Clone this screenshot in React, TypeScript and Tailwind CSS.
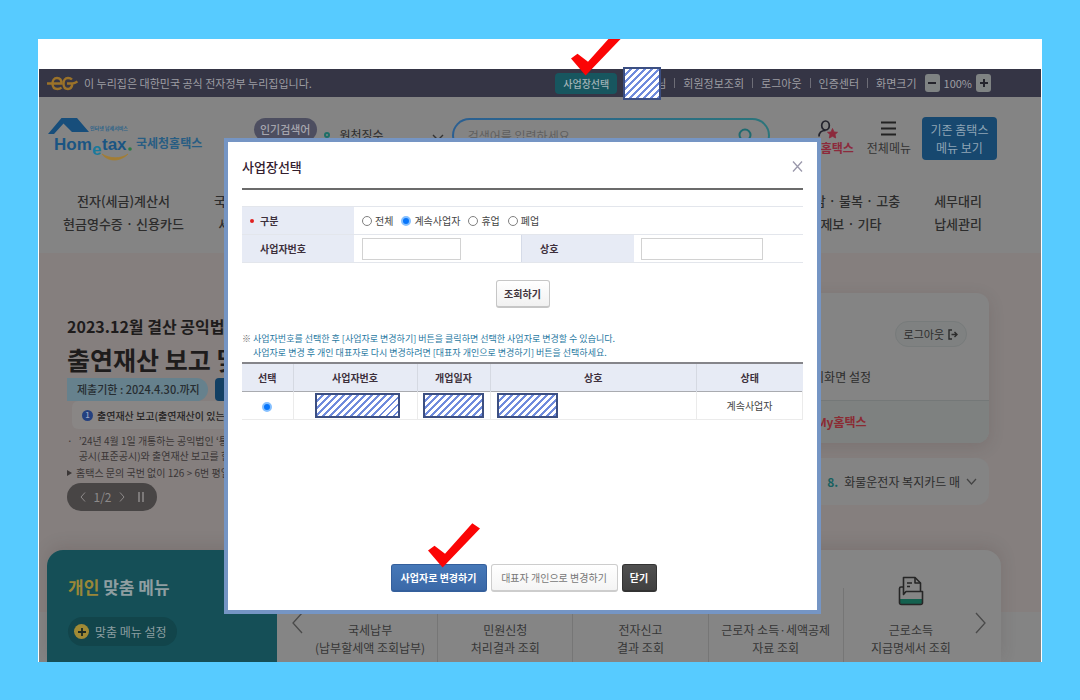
import React from 'react';

const hatchClass =
  'block border-2 border-[#3c4f82] bg-[repeating-linear-gradient(135deg,#ffffff_0px,#ffffff_3px,#6f8bdc_3px,#6f8bdc_5px)]';

function Hatch({ className }: { className: string }) {
  return <span aria-hidden="true" className={`${hatchClass} ${className}`} />;
}

function CheckMark({ className }: { className: string }) {
  return (
    <svg
      aria-hidden="true"
      viewBox="0 0 52 45"
      className={`pointer-events-none absolute z-20 h-[45px] w-[52px] max-w-none ${className}`}
    >
      <path d="M0 27.5 L6.5 22.8 L17 30.8 L44.3 0.3 L52 5.5 L14.6 44.6 Z" fill="#fb0505" />
    </svg>
  );
}

function Divider() {
  return <span className="h-[10px] w-px bg-[#6d6d77]" />;
}

function TopBar() {
  return (
    <div className="flex h-7 items-center justify-between bg-[#353545] pr-[50px] pl-2 text-[11px] text-[#9d9da3]">
      <div className="flex items-center gap-[6px]">
        <svg aria-hidden="true" viewBox="0 0 31 15" className="h-[15px] w-[31px]" fill="none" stroke="#9b7229" strokeWidth="2.4">
          <path d="M0 7.5 H14.5 C14.5 3.5 12.5 2 10 2 C7 2 5.5 4.5 5.5 7.5 C5.5 11 7.5 13 10.5 13 C12 13 13.5 12.5 14.5 11.5" />
          <path d="M25 3.5 C24 2.5 22.500 2 21 2 C18 2 16.500 4.500 16.500 7.500 C16.500 11 18 13 21 13 C24 13 25 11 25.500 7.500 H20 M25.500 7.500 C27.500 7.500 28.500 7 30.500 5.500" />
        </svg>
        <span>이 누리집은 대한민국 공식 전자정부 누리집입니다.</span>
      </div>
      <div className="flex items-center gap-2">
        <div className="relative -mr-[2px]">
          <button className="h-[21px] w-[62px] rounded bg-[#17565f] text-[10px] font-medium text-[#a3b4b9]">
            사업장선택
          </button>
          <CheckMark className="-top-[42px] left-4" />
        </div>
        <div className="flex items-center">
          <Hatch className="relative z-10 h-[33px] w-[38px]" />
          <span className="-ml-[5px]">님</span>
        </div>
        <Divider />
        <a href="#member">회원정보조회</a>
        <Divider />
        <a href="#logout">로그아웃</a>
        <Divider />
        <a href="#cert">인증센터</a>
        <Divider />
        <span>화면크기</span>
        <div className="flex items-center gap-1">
          <button aria-label="축소" className="flex h-[18px] w-[15px] items-center justify-center rounded-[3px] bg-[#7f8383]">
            <span className="h-[2px] w-2 bg-[#24242c]" />
          </button>
          <span>100%</span>
          <button aria-label="확대" className="flex h-[18px] w-[15px] items-center justify-center rounded-[3px] bg-[#7f8383]">
            <svg viewBox="0 0 8 8" className="size-2" stroke="#24242c" strokeWidth="2">
              <path d="M4 0V8M0 4H8" />
            </svg>
          </button>
        </div>
      </div>
    </div>
  );
}

function Logo() {
  return (
    <a href="#home" aria-label="홈택스" className="block">
      <svg viewBox="0 0 158 46" className="h-[46px] w-[158px]">
        <path d="M0 17 L13.500 1 H29 L41 15 H24 L15.500 6.500 L6 17 Z" fill="#174e7b" />
        <text x="42" y="13" fontSize="5" fontWeight="700" fill="#2c6389" fontFamily="'Noto Sans CJK KR', sans-serif">
          인터넷 납세서비스
        </text>
        <g fontFamily="'Liberation Sans', sans-serif" fontWeight="700" fill="#1a5583">
          <text x="6" y="33" fontSize="17">Hom</text>
          <text x="44" y="38" fontSize="17" fill="#197a9c">e</text>
          <text x="54" y="33" fontSize="17">tax</text>
        </g>
        <circle cx="82" cy="32" r="1.8" fill="#2c7a45" />
        <path d="M54 37 C60 45 72 45 80 37 C73 42 62 42 54 37 Z" fill="#a37d33" stroke="#a37d33" strokeWidth="0.800" />
        <text x="88" y="31" fontSize="12" fontWeight="700" fill="#285d83" fontFamily="'Noto Sans CJK KR', sans-serif">
          국세청홈택스
        </text>
      </svg>
    </a>
  );
}

function SiteHeader() {
  return (
    <header className="bg-[#848484] pt-5 pb-[18px] text-[#2c2c2c]">
      <div className="flex h-[68px] items-start justify-between pr-11 pl-[9px]">
        <Logo />
        <div className="ml-[14px] flex items-start pt-px">
          <span className="rounded-xl bg-[#4d4e60] px-[6px] text-[11px] leading-[23px] font-medium text-[#a5a5ad]">인기검색어</span>
          <div className="ml-[7px] flex items-center gap-[10px] pt-[7px] text-[12px] leading-5">
            <span className="size-[6px] rounded-full border-2 border-[#1d6f68]" />
            <span>원천징수</span>
          </div>
          <svg aria-hidden="true" viewBox="0 0 12 8" className="mt-4 ml-12 h-2 w-3" fill="none" stroke="#333" strokeWidth="1.400">
            <path d="M1 1L6 6L11 1" />
          </svg>
          <div className="ml-2 rounded-[18px] bg-linear-to-r from-[#2b5f92] to-[#2b757b] p-[2px]">
            <div className="flex h-[31px] w-[314px] items-center justify-between rounded-2xl bg-[#848484] px-[14px]">
              <input
                aria-label="검색어"
                placeholder="검색어를 입력하세요"
                className="w-60 bg-transparent text-[12px] outline-none placeholder:text-[#5f5f5f]"
              />
              <svg aria-hidden="true" viewBox="0 0 16 16" className="size-4" fill="none" stroke="#1f6a70" strokeWidth="2">
                <circle cx="7" cy="7" r="5.500" />
                <path d="M11 11L15 15" />
              </svg>
            </div>
          </div>
        </div>
        <div className="flex items-start text-[12px] leading-4">
          <a href="#my" className="flex flex-col items-center pt-[3px] font-bold text-[#8c2a3c]">
            <svg aria-hidden="true" viewBox="0 0 20 19" className="mr-px h-[19px] w-5" fill="none" stroke="#23232c" strokeWidth="1.700">
              <ellipse cx="7.500" cy="5.500" rx="3.800" ry="4.500" />
              <path d="M1 16.500C1 12.500 3.500 10.500 7.500 10.500" />
              <path d="M14.500 8.500L16 12L19.500 12.300L17 14.500L17.700 18L14.500 16.300L11.300 18L12 14.500L9.500 12.300L13 12Z" fill="#8c2a3c" stroke="#8c2a3c" strokeWidth="0.800" />
            </svg>
            <span className="mt-px">My홈택스</span>
          </a>
          <a href="#menu" className="ml-[13px] flex flex-col items-center pt-1 text-[#333]">
            <svg aria-hidden="true" viewBox="0 0 15 15" className="size-[15px]" stroke="#222" strokeWidth="2">
              <path d="M0 1.500H15M0 7.500H15M0 13.500H15" />
            </svg>
            <span className="mt-1">전체메뉴</span>
          </a>
          <button className="ml-[11px] h-[43px] w-[75px] rounded bg-[#17486f] text-[12px] leading-[18px] text-[#8fa5b6]">
            기존 홈택스
            <br />
            메뉴 보기
          </button>
        </div>
      </div>
      <nav className="flex justify-between pt-1 pr-[59px] pl-6 text-center text-[13px] leading-[23px] font-medium whitespace-nowrap">
        <div className="flex gap-[30px]">
          <a href="#invoice">전자(세금)계산서<br />현금영수증 · 신용카드</a>
          <a href="#cert">국세증명 · 사업자등록<br />세금관련 신청 · 신고</a>
        </div>
        <div className="flex gap-[34px]">
          <a href="#consult">상담 · 불복 · 고충<br />제보 · 기타</a>
          <a href="#agent">세무대리<br />납세관리</a>
        </div>
      </nav>
    </header>
  );
}

function Hero() {
  return (
    <section className="flex items-start justify-between bg-[#857f7e] pr-[52px] pb-[39px] pl-7 whitespace-nowrap">
      <div className="pt-[58px] text-[10px] text-[#3a3636]">
        <h2 className="text-[16px] leading-[30px] font-bold text-[#1e1c1c]">2023.12월 결산 공익법인</h2>
        <h1 className="text-[25px] leading-[37px] font-bold text-[#1e1c1c]">출연재산 보고 및</h1>
        <div className="flex gap-[7px] text-[11px] leading-[23px] font-medium">
          <span className="w-[141px] rounded-r-full bg-[#66818d] pl-[10px] text-[#262d31]">제출기한 : 2024.4.30.까지</span>
          <span className="rounded-l bg-[#123f63] px-3 text-[#8fa5b6]">공시</span>
        </div>
        <div className="ml-[5px] flex h-7 items-center gap-1 rounded-md bg-[#898685] pl-[10px] font-medium text-[#262424]">
          <span className="flex size-[11px] items-center justify-center rounded-full bg-[#24407f] text-[8px] text-[#9aa7c4]">1</span>
          출연재산 보고(출연재산이 있는 공익
        </div>
        <ul className="mt-1 leading-[15px]">
          <li className="flex gap-[6px]">
            <span>·</span>
            <span>’24년 4월 1일 개통하는 공익법인 ‘통합<br />공시(표준공시)와 출연재산 보고를 한</span>
          </li>
          <li className="mt-[2px] flex items-center gap-1">
            <svg aria-hidden="true" viewBox="0 0 5 6" className="h-[6px] w-[5px]" fill="#3a3636"><path d="M0 0L5 3L0 6Z" /></svg>
            홈택스 문의 국번 없이 126 &gt; 6번 평일
          </li>
        </ul>
        <div className="mt-[3px] flex h-7 w-[90px] items-center justify-center gap-[7px] rounded-full bg-[#484545] text-[12px] text-[#8d8a8a]">
          <button aria-label="이전">
            <svg viewBox="0 0 6 10" className="h-[10px] w-[6px]" fill="none" stroke="#8d8a8a"><path d="M5 0.500L1 5L5 9.500" /></svg>
          </button>
          <span>1/2</span>
          <button aria-label="다음">
            <svg viewBox="0 0 6 10" className="h-[10px] w-[6px]" fill="none" stroke="#8d8a8a"><path d="M1 0.500L5 5L1 9.500" /></svg>
          </button>
          <button aria-label="정지" className="ml-[6px]">
            <svg viewBox="0 0 6 10" className="h-[10px] w-[6px]" stroke="#8d8a8a" strokeWidth="1.500"><path d="M1 0V10M5 0V10" /></svg>
          </button>
        </div>
      </div>

      <div className="w-[295px] pt-10 text-[12px] text-[#2c2c2c]">
        <div className="overflow-hidden rounded-xl bg-[#848484] shadow-[0_4px_16px_rgba(60,50,50,0.15)]">
          <div className="flex flex-col gap-[18px] pt-7 pb-[11px]">
            <button className="mr-[22px] flex h-[26px] items-center gap-1 self-end rounded-full border border-[#777b7b] bg-[#7f8181] px-2 text-[11px]">
              로그아웃
              <svg aria-hidden="true" viewBox="0 0 10 11" className="h-[11px] w-[10px]" fill="none" stroke="#2c2c2c" strokeWidth="1.400">
                <path d="M4 1H1V10H4M3.500 5.500H9M6.500 3L9 5.500L6.500 8" />
              </svg>
            </button>
            <a href="#start" className="pr-[10px] text-center leading-6">초기화면 설정</a>
          </div>
          <a href="#myhometax" className="block border-t border-[#747878] bg-[#7e8180] text-center leading-[42px] font-bold text-[#8b2b33]">
            My홈택스
          </a>
        </div>
        <div className="mt-[15px] flex h-[47px] items-center justify-end gap-[6px] rounded-xl bg-[#848484] pr-3">
          <b className="text-[#17605f]">8.</b>
          <span>화물운전자 복지카드 매</span>
          <svg aria-hidden="true" viewBox="0 0 11 7" className="h-[7px] w-[11px]" fill="none" stroke="#444" strokeWidth="1.200"><path d="M1 1L5.500 6L10 1" /></svg>
        </div>
      </div>
    </section>
  );
}

const quickLinks = [
  ['국세납부', '(납부할세액 조회납부)'],
  ['민원신청', '처리결과 조회'],
  ['전자신고', '결과 조회'],
  ['근로자 소득·세액공제', '자료 조회'],
  ['근로소득', '지급명세서 조회'],
];

function FolderIcon() {
  return (
    <svg aria-hidden="true" viewBox="0 0 26 30" className="h-[30px] w-[26px]" fill="none" stroke="#262626" strokeWidth="1.600" strokeLinejoin="round">
      <path d="M2 23H24V26.500Q24 28 22.500 28H3.500Q2 28 2 26.500Z" fill="#14614f" stroke="none" />
      <path d="M5.500 11H3Q1.500 11 1.500 12.500V26.500Q1.500 28.500 3.500 28.500H22.500Q24.500 28.500 24.500 26.500V15.500H8L5.500 18.500V1.500H17L22.500 7V15" />
      <path d="M17 1.500V7H22.500M9 7H14M9 10.500H12" />
    </svg>
  );
}

function BottomPanel() {
  return (
    <section className="flex flex-1 bg-[linear-gradient(#857f7e_62px,#848484_62px)] pr-10 pl-2">
      <div className="flex flex-1 overflow-hidden rounded-t-2xl bg-[#858585] shadow-[0_-4px_16px_rgba(60,50,50,0.15)]">
        <div className="w-[230px] shrink-0 bg-[#154f57] pt-[22px] pl-[21px]">
          <h2 className="text-[17px] leading-[30px] font-bold text-[#8f9ea1]">
            <span className="text-[#9a8738]">개인</span> 맞춤 메뉴
          </h2>
          <button className="mt-[15px] flex h-[29px] items-center gap-[6px] rounded-full bg-[#12454b] pr-[10px] pl-[6px] text-[12px] text-[#8b9da0]">
            <span className="flex size-[15px] items-center justify-center rounded-full bg-[#a08a35]">
              <svg aria-hidden="true" viewBox="0 0 8 8" className="size-2" stroke="#1b2a24" strokeWidth="1.800"><path d="M4 0V8M0 4H8" /></svg>
            </span>
            맞춤 메뉴 설정
          </button>
        </div>
        <div className="relative flex flex-1 pr-[23px] pl-[26px]">
          <button aria-label="이전 메뉴" className="absolute top-[62px] left-[15px]">
            <svg viewBox="0 0 11 22" className="h-[22px] w-[11px]" fill="none" stroke="#4a4a4a" strokeWidth="1.300"><path d="M10 1L1 11L10 21" /></svg>
          </button>
          {quickLinks.map(([first, second], i) => (
            <a
              key={first}
              href="#quick"
              className="mt-[38px] flex flex-1 flex-col items-center border-[#767676] text-[12px] leading-[18px] whitespace-nowrap text-[#363636] not-last-of-type:border-r"
            >
              <span className="-mt-3 mb-[15px] flex h-[30px]">{i === 4 && <FolderIcon />}</span>
              <span>{first}</span>
              <span>{second}</span>
            </a>
          ))}
          <button aria-label="다음 메뉴" className="absolute top-[62px] right-[15px]">
            <svg viewBox="0 0 11 22" className="h-[22px] w-[11px]" fill="none" stroke="#4a4a4a" strokeWidth="1.300"><path d="M1 1L10 11L1 21" /></svg>
          </button>
        </div>
      </div>
    </section>
  );
}

const radioClass =
  'size-[10px] appearance-none rounded-full border border-[#808080] bg-white checked:border-2 checked:border-[#86c0ff] checked:bg-[#0876fb]';

const statuses = ['전체', '계속사업자', '휴업', '폐업'];

function Modal() {
  return (
    <div role="dialog" aria-label="사업장선택" className="w-[597px] border-4 border-[#7595c4] bg-white px-[14px] pb-[18px] text-[10px] text-[#444]">
      <div className="flex h-[46px] items-center justify-between pt-[3px] text-[#33202f]">
        <h2 className="text-[13px] font-medium">사업장선택</h2>
        <button aria-label="닫기">
          <svg viewBox="0 0 11 11" className="size-[11px]" stroke="#9a98ab" strokeWidth="1.300"><path d="M1 0.500L10 10.500M10 0.500L1 10.500" /></svg>
        </button>
      </div>
      <div className="h-[2px] bg-[#6b6b6b]" />

      <div className="mt-4 border-y border-[#e3e6ec]">
        <div className="flex h-7 items-stretch border-b border-[#e3e6ec]">
          <div className="flex w-28 items-center gap-[6px] bg-[#e7ebf5] pl-2 font-bold text-[#3d303c]">
            <span className="size-1 rounded-full bg-[#e02020]" />구분
          </div>
          <div className="flex items-center gap-2 pl-2">
            {statuses.map((name) => (
              <label key={name} className="flex items-center gap-[3px]">
                <input type="radio" name="status" defaultChecked={name === '계속사업자'} className={radioClass} />
                {name}
              </label>
            ))}
          </div>
        </div>
        <div className="flex h-[27px] items-stretch font-bold text-[#3d303c]">
          <label htmlFor="bizno" className="flex w-28 items-center bg-[#e7ebf5] pl-[18px]">사업자번호</label>
          <div className="flex w-[167px] items-center pl-2">
            <input id="bizno" className="h-[22px] w-[99px] border border-[#d2d2d2] bg-white px-1 font-normal" />
          </div>
          <label htmlFor="bizname" className="flex w-[113px] items-center border-l border-[#d5dbe8] bg-[#e7ebf5] pl-[18px]">상호</label>
          <div className="flex flex-1 items-center pl-[7px]">
            <input id="bizname" className="h-[22px] w-[122px] border border-[#d2d2d2] bg-white px-1 font-normal" />
          </div>
        </div>
      </div>

      <div className="mt-[17px] flex justify-center">
        <button className="h-7 w-[54px] rounded-[3px] border border-b-2 border-[#c6c6c6] bg-linear-to-b from-white to-[#f1f1f1] font-bold text-[#40333c]">
          조회하기
        </button>
      </div>

      <div className="mt-[24px] flex gap-[2px] text-[9px] leading-[14px] text-[#27789f]">
        <span className="text-[#666]">※</span>
        <p>
          사업자번호를 선택한 후 [사업자로 변경하기] 버튼을 클릭하면 선택한 사업자로 변경할 수 있습니다.
          <br />
          사업자로 변경 후 개인 대표자로 다시 변경하려면 [대표자 개인으로 변경하기] 버튼을 선택하세요.
        </p>
      </div>

      <table className="mt-[2px] w-full table-fixed border-collapse text-center">
        <thead>
          <tr className="h-7 border-t-2 border-b border-t-[#85858a] border-b-[#a9abb0] bg-[#e7ebf5] font-bold text-[#3d303c]">
            <th className="w-[51px] border-r border-r-[#d5d9e2]">선택</th>
            <th className="w-[124px] border-r border-r-[#d5d9e2]">사업자번호</th>
            <th className="w-[73px] border-r border-r-[#d5d9e2]">개업일자</th>
            <th className="border-r border-r-[#d5d9e2]">상호</th>
            <th className="w-[106px]">상태</th>
          </tr>
        </thead>
        <tbody>
          <tr className="h-7 border-b border-b-[#ebebeb]">
            <td className="border-r border-r-[#ebebeb]">
              <input type="radio" name="row" aria-label="사업자 선택" defaultChecked className={`align-middle ${radioClass}`} />
            </td>
            <td className="border-r border-r-[#ebebeb]"><Hatch className="ml-[21px] h-[25px] w-[85px]" /></td>
            <td className="border-r border-r-[#ebebeb]"><Hatch className="mx-auto h-[25px] w-[61px]" /></td>
            <td className="border-r border-r-[#ebebeb]"><Hatch className="ml-[6px] h-[25px] w-[61px]" /></td>
            <td className="border-r border-r-[#ebebeb]">계속사업자</td>
          </tr>
        </tbody>
      </table>

      <div className="mt-36 flex justify-center gap-1 pl-[2px]">
        <div className="relative">
          <button className="h-7 w-24 rounded-[3px] border border-b-2 border-[#345f9c] bg-linear-to-b from-[#4678b8] to-[#3b69a8] font-bold text-white">
            사업자로 변경하기
          </button>
          <CheckMark className="-top-[41px] left-[37px]" />
        </div>
        <button className="h-7 w-[127px] rounded-[3px] border border-b-2 border-[#cdcdcd] bg-linear-to-b from-white to-[#f4f4f4] text-[#777]">
          대표자 개인으로 변경하기
        </button>
        <button className="h-7 w-[35px] rounded-[3px] border border-b-2 border-[#333] bg-linear-to-b from-[#505050] to-[#404040] font-bold text-white">
          닫기
        </button>
      </div>
    </div>
  );
}

export default function App() {
  return (
    <div className="flex min-h-screen flex-col bg-[#57cbff] px-[38px] pt-[39px] pb-[38px] font-['Noto_Sans_CJK_KR','Noto_Sans',sans-serif]">
      <div className="relative flex flex-1 flex-col overflow-hidden bg-white px-px">
        <div className="h-[30px]" />
        <TopBar />
        <SiteHeader />
        <Hero />
        <BottomPanel />
        <div className="absolute inset-x-0 top-[99px] flex justify-center pr-[35px]">
          <Modal />
        </div>
      </div>
    </div>
  );
}
